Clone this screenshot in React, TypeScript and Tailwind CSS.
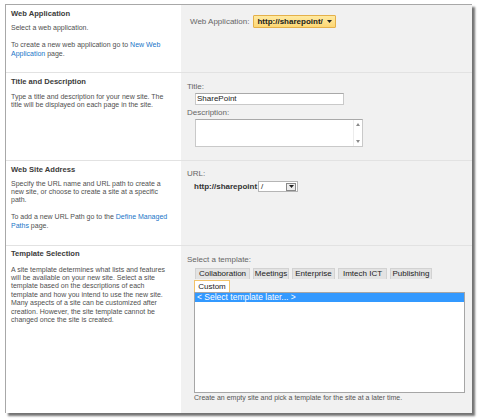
import React from "react";

type Tab = { label: string; width: string };

const tabs: Tab[] = [
  { label: "Collaboration", width: "w-[55px]" },
  { label: "Meetings", width: "w-[36px]" },
  { label: "Enterprise", width: "w-[43px]" },
  { label: "Imtech ICT", width: "w-[49px]" },
  { label: "Publishing", width: "w-[42px]" },
];

function Heading({ children }: { children: React.ReactNode }) {
  return (
    <div className="text-[7.6px] font-bold leading-[9px] text-[#3b3b3b]">
      {children}
    </div>
  );
}

function Para({
  children,
  className = "",
}: {
  children: React.ReactNode;
  className?: string;
}) {
  return (
    <p className={`text-[7px] leading-[8.4px] text-[#4f4f4f] ${className}`}>
      {children}
    </p>
  );
}

function Link({ children }: { children: React.ReactNode }) {
  return <span className="text-[#1a75c8]">{children}</span>;
}

function Caret({ className = "" }: { className?: string }) {
  return (
    <svg width="5" height="3" viewBox="0 0 5 3" className={className}>
      <path d="M0 0h5L2.5 3z" fill="#222" />
    </svg>
  );
}

function App() {
  return (
    <div className="h-[420px] w-[480px] bg-white pl-[5px] pt-[4px] font-['Liberation_Sans',Arial,sans-serif]">
      <div className="flex h-[409px] w-[467px] flex-col border-l border-t border-[#a8a8a8] shadow-[3px_3px_2px_rgba(0,0,0,0.55)]">
        {/* Web Application */}
        <div className="flex h-[68px] border-b border-[#e2e2e2]">
          <div className="w-[175px] bg-white pl-[5px] pt-[4px]">
            <Heading>Web Application</Heading>
            <Para className="mt-[6px]">Select a web application.</Para>
            <Para className="mt-[9px]">
              To create a new web application go to <Link>New Web</Link>
              <br />
              <Link>Application</Link> page.
            </Para>
          </div>
          <div className="flex flex-1 items-start bg-[#f1f1f1] pl-[9px] pt-[10px]">
            <div className="flex h-[13px] items-center text-[8px] text-[#666]">
              Web Application:
            </div>
            <div className="ml-[4px] flex h-[13px] w-[83px] items-center gap-[4px] rounded-[1px] border border-[#e4b04a] bg-gradient-to-b from-[#ffeaa0] to-[#fdd774] pl-[3px] text-[8px] font-bold text-[#1a1a1a]">
              http://sharepoint/
              <Caret />
            </div>
          </div>
        </div>

        {/* Title and Description */}
        <div className="flex h-[88px] border-b border-[#e2e2e2]">
          <div className="w-[175px] bg-white pl-[5px] pt-[3.5px]">
            <Heading>Title and Description</Heading>
            <Para className="mt-[7px]">
              Type a title and description for your new site. The
              <br />
              title will be displayed on each page in the site.
            </Para>
          </div>
          <div className="flex flex-1 flex-col bg-[#f1f1f1] pl-[6px] pt-[9px]">
            <div className="text-[8px] leading-[10px] text-[#666]">Title:</div>
            <div className="ml-[8px] mt-[1px] flex h-[12px] w-[149px] items-center border border-[#c9c9c9] border-t-[#a9a9a9] bg-white pl-[1px] text-[8px] text-[#222]">
              SharePoint
            </div>
            <div className="mt-[3px] text-[8px] leading-[10px] text-[#666]">
              Description:
            </div>
            <div className="ml-[8px] mt-[1px] flex h-[28px] w-[168px] justify-end border border-[#c9c9c9] border-t-[#a9a9a9] bg-white">
              <div className="flex w-[9px] flex-col items-center justify-between border-l border-[#ececec] py-[3px]">
                <svg width="4" height="3" viewBox="0 0 4 3">
                  <path d="M0 3h4L2 0z" fill="#8a8a8a" />
                </svg>
                <svg width="4" height="3" viewBox="0 0 4 3">
                  <path d="M0 0h4L2 3z" fill="#8a8a8a" />
                </svg>
              </div>
            </div>
          </div>
        </div>

        {/* Web Site Address */}
        <div className="flex h-[85px] border-b border-[#e2e2e2]">
          <div className="w-[175px] bg-white pl-[5px] pt-[3.5px]">
            <Heading>Web Site Address</Heading>
            <Para className="mt-[6px]">
              Specify the URL name and URL path to create a
              <br />
              new site, or choose to create a site at a specific
              <br />
              path.
            </Para>
            <Para className="mt-[8.5px]">
              To add a new URL Path go to the <Link>Define Managed</Link>
              <br />
              <Link>Paths</Link> page.
            </Para>
          </div>
          <div className="flex flex-1 flex-col bg-[#f1f1f1] pl-[6px] pt-[8px]">
            <div className="text-[8px] leading-[10px] text-[#666]">URL:</div>
            <div className="ml-[7px] mt-[2px] flex h-[11px] items-center">
              <span className="text-[8px] font-bold text-[#333]">
                http://sharepoint
              </span>
              <div className="ml-[1px] flex h-[11px] w-[40px] items-center justify-between border border-[#b5b5b5] bg-white pl-[2px] pr-[1px] text-[8px] text-[#222]">
                /
                <div className="flex h-[8px] w-[10px] items-center justify-center border border-[#888] bg-[#ececec]">
                  <Caret />
                </div>
              </div>
            </div>
          </div>
        </div>

        {/* Template Selection */}
        <div className="flex flex-1">
          <div className="w-[175px] bg-white pl-[5px] pt-[2.5px]">
            <Heading>Template Selection</Heading>
            <Para className="mt-[8px]">
              A site template determines what lists and features
              <br />
              will be available on your new site. Select a site
              <br />
              template based on the descriptions of each
              <br />
              template and how you intend to use the new site.
              <br />
              Many aspects of a site can be customized after
              <br />
              creation. However, the site template cannot be
              <br />
              changed once the site is created.
            </Para>
          </div>
          <div className="flex flex-1 flex-col bg-[#f1f1f1] pl-[6px] pt-[9px]">
            <div className="text-[8px] leading-[10px] text-[#666]">
              Select a template:
            </div>
            <div className="ml-[8px] mt-[3px] flex h-[11px] gap-[3px]">
              {tabs.map((tab) => (
                <div
                  key={tab.label}
                  className={`${tab.width} flex items-center justify-center border border-b-0 border-[#d2d2d2] bg-[#e3e3e3] text-[8px] text-[#222]`}
                >
                  {tab.label}
                </div>
              ))}
            </div>
            <div className="ml-[7px] mt-[1px] flex h-[12px] w-[36px] items-center justify-center border border-b-0 border-[#f2c36a] bg-white text-[8px] text-[#222]">
              Custom
            </div>
            <div className="ml-[7px] h-[101px] w-[271px] border border-[#a6a6a6] bg-white">
              <div className="h-[9px] bg-[#3399ff] pl-[2px] text-[8.5px] leading-[9px] text-white">
                {"< Select template later... >"}
              </div>
            </div>
            <div className="ml-[7px] text-[7px] leading-[9px] text-[#555]">
              Create an empty site and pick a template for the site at a later
              time.
            </div>
          </div>
        </div>
      </div>
    </div>
  );
}

export default App;
